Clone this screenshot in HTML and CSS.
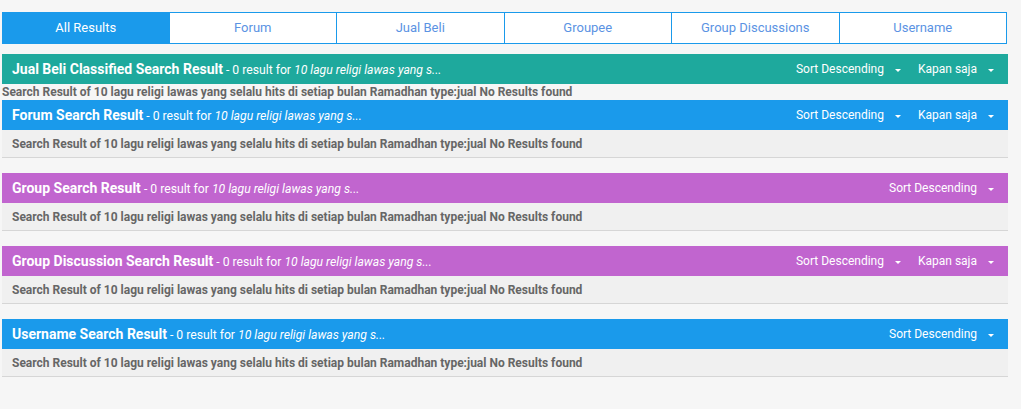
FILE: index.html
```html
<!DOCTYPE html>
<html lang="id">
<head>
<meta charset="utf-8">
<title>Search Results</title>
<link rel="stylesheet" href="styles.css">
</head>
<body>
<div class="page">
  <nav class="tabs">
    <div class="tab active">All Results</div>
    <div class="tab">Forum</div>
    <div class="tab">Jual Beli</div>
    <div class="tab">Groupee</div>
    <div class="tab">Group Discussions</div>
    <div class="tab">Username</div>
  </nav>

  <section class="result first">
    <header class="result-head teal">
      <div class="head-title"><b>Jual Beli Classified Search Result</b> - 0 result for <i>10 lagu religi lawas yang s...</i></div>
      <div class="head-controls">
        <span class="dd">Sort Descending<span class="caret"></span></span>
        <span class="dd">Kapan saja<span class="caret"></span></span>
      </div>
    </header>
    <div class="result-plain">Search Result of 10 lagu religi lawas yang selalu hits di setiap bulan Ramadhan type:jual No Results found</div>
  </section>

  <section class="result">
    <header class="result-head blue">
      <div class="head-title"><b>Forum Search Result</b> - 0 result for <i>10 lagu religi lawas yang s...</i></div>
      <div class="head-controls">
        <span class="dd">Sort Descending<span class="caret"></span></span>
        <span class="dd">Kapan saja<span class="caret"></span></span>
      </div>
    </header>
    <div class="result-body">Search Result of 10 lagu religi lawas yang selalu hits di setiap bulan Ramadhan type:jual No Results found</div>
  </section>

  <section class="result">
    <header class="result-head purple">
      <div class="head-title"><b>Group Search Result</b> - 0 result for <i>10 lagu religi lawas yang s...</i></div>
      <div class="head-controls">
        <span class="dd">Sort Descending<span class="caret"></span></span>
      </div>
    </header>
    <div class="result-body">Search Result of 10 lagu religi lawas yang selalu hits di setiap bulan Ramadhan type:jual No Results found</div>
  </section>

  <section class="result">
    <header class="result-head purple">
      <div class="head-title"><b>Group Discussion Search Result</b> - 0 result for <i>10 lagu religi lawas yang s...</i></div>
      <div class="head-controls">
        <span class="dd">Sort Descending<span class="caret"></span></span>
        <span class="dd">Kapan saja<span class="caret"></span></span>
      </div>
    </header>
    <div class="result-body">Search Result of 10 lagu religi lawas yang selalu hits di setiap bulan Ramadhan type:jual No Results found</div>
  </section>

  <section class="result">
    <header class="result-head blue">
      <div class="head-title"><b>Username Search Result</b> - 0 result for <i>10 lagu religi lawas yang s...</i></div>
      <div class="head-controls">
        <span class="dd">Sort Descending<span class="caret"></span></span>
      </div>
    </header>
    <div class="result-body">Search Result of 10 lagu religi lawas yang selalu hits di setiap bulan Ramadhan type:jual No Results found</div>
  </section>
</div>
</body>
</html>
```

FILE: styles.css
```css
* { box-sizing: border-box; }

html, body {
  margin: 0;
  padding: 0;
  background: #f6f6f6;
  font-family: Roboto, "Liberation Sans", sans-serif;
  font-size: 12px;
}

.page {
  width: 1006px;
  margin-left: 2px;
  padding-top: 12px;
}

.tabs {
  display: grid;
  grid-template-columns: repeat(6, 1fr);
  height: 32px;
  width: 1005px;
  margin-bottom: 10px;
}

.tab {
  display: flex;
  align-items: center;
  justify-content: center;
  padding-bottom: 1px;
  background: #ffffff;
  border: 1px solid #1a9aeb;
  border-left: none;
  color: #5b93e3;
  font-size: 13px;
}

.tab:first-child { border-left: 1px solid #1a9aeb; }

.tab.active {
  background: #1a9aeb;
  color: #ffffff;
}

.result { margin-bottom: 15px; }
.result.first { margin-bottom: 0; }

.result-head {
  height: 30px;
  display: flex;
  align-items: center;
  justify-content: space-between;
  padding: 0 14px 0 10px;
  color: #ffffff;
  font-size: 12.2px;
}

.result-head b { font-size: 14px; font-weight: 700; }
.result-head i { font-style: italic; }

.teal { background: #1ea99d; }
.blue { background: #1a9aeb; }
.purple { background: #c165cf; }

.head-controls {
  display: flex;
  gap: 17px;
  font-size: 12px;
}

.dd {
  display: inline-flex;
  align-items: center;
}

.caret {
  width: 0;
  height: 0;
  margin-left: 11px;
  border-left: 3px solid transparent;
  border-right: 3px solid transparent;
  border-top: 3px solid #ffffff;
  margin-top: 2px;
}

.result-plain {
  height: 16px;
  line-height: 16px;
  color: #666666;
  font-weight: 700;
}

.result-body {
  height: 28px;
  padding: 0 10px;
  display: flex;
  align-items: center;
  background: #f0f0f0;
  border-bottom: 1px solid #d6d6d6;
  color: #666666;
  font-weight: 700;
}
```
